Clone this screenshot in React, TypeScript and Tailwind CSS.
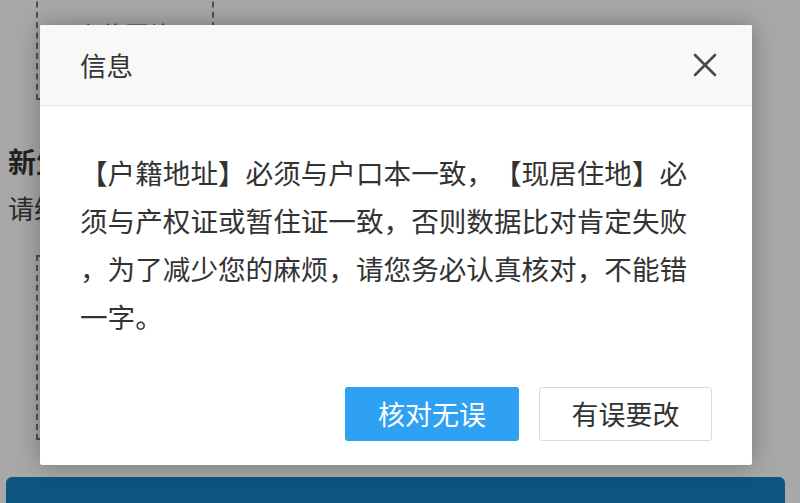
const font = { fontFamily: '"Noto Sans CJK SC", "Noto Sans", sans-serif' };

const lines = [
  "【户籍地址】必须与户口本一致，【现居住地】必",
  "须与产权证或暂住证一致，否则数据比对肯定失败",
  "，为了减少您的麻烦，请您务必认真核对，不能错",
  "一字。",
];

function CloseIcon() {
  return (
    <svg width="24" height="24" viewBox="0 0 24 24" fill="none" stroke="#4a4a4a" strokeWidth="2.6" strokeLinecap="round">
      <path d="M2 2 L22 22 M22 2 L2 22" />
    </svg>
  );
}

export default function App() {
  return (
    <div className="relative w-[800px] h-[503px] overflow-hidden bg-white text-[#333]" style={font}>
      {/* page behind the modal */}
      <div className="flex flex-col">
        <div className="-mt-[60px] ml-[36px] w-[178px] h-[160px] border-2 border-dashed border-[#7a7a7a] flex justify-center pt-[74px]">
          <span className="text-[24px] leading-[36px] text-[#666]">上传图片</span>
        </div>
        <div className="mt-[41px] ml-[8px] text-[28px] leading-[40px] font-bold text-[#333] whitespace-nowrap">新生</div>
        <div className="mt-[7px] ml-[8px] text-[26px] leading-[40px] text-[#444] whitespace-nowrap">请维</div>
        <div className="mt-[27px] ml-[36px] w-[300px] h-[185px] border-2 border-dashed border-[#7a7a7a]" />
        <div className="mt-[37px] mx-[6px] mr-[15px] h-[40px] rounded-t-md bg-[#1483c4]" />
      </div>

      {/* overlay */}
      <div className="absolute inset-0 bg-black/[0.34]" />

      {/* dialog */}
      <div className="absolute left-[40px] top-[25px] w-[712px] h-[440px] bg-white rounded-[2px] shadow-[0_0_24px_rgba(0,0,0,0.3)] flex flex-col">
        <div className="h-[81px] flex items-center justify-between pl-[40px] pr-[35px] bg-[#f8f8f8] border-b border-[#e6e6e6] rounded-t-[2px]">
          <span className="text-[26.5px] leading-none text-[#333]">信息</span>
          <CloseIcon />
        </div>
        <div className="pt-[42px] px-[40px] text-[27.6px] leading-[48px] text-[#333] [text-spacing-trim:space-all]">
          {lines.map((l) => (
            <div key={l} className="whitespace-nowrap">{l}</div>
          ))}
        </div>
        <div className="mt-auto flex justify-end gap-[20px] pr-[40px] pb-[24px]">
          <button className="w-[174px] h-[54px] rounded-[3px] bg-[#2ea1f2] text-white text-[27px]">核对无误</button>
          <button className="w-[173px] h-[54px] rounded-[3px] bg-white border border-[#dadada] text-[#333] text-[27px]">有误要改</button>
        </div>
      </div>
    </div>
  );
}
